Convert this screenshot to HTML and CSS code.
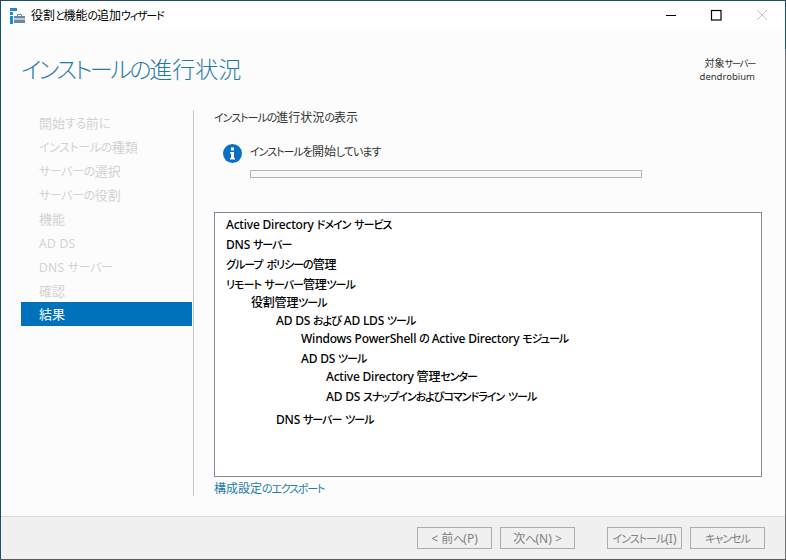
FILE: index.html
```html
<!DOCTYPE html>
<html lang="ja">
<head>
<meta charset="utf-8">
<title>役割と機能の追加ウィザード</title>
<link rel="stylesheet" href="styles.css">
</head>
<body>
<div class="window">
  <header class="titlebar">
    <svg class="app-icon" width="16" height="16" viewBox="0 0 16 16">
      <rect x="0" y="0" width="7" height="3" fill="#1e88d8"/>
      <rect x="0" y="4" width="3" height="3" fill="#1e88d8"/>
      <rect x="0" y="8" width="3" height="8" fill="#1e88d8"/>
      <rect x="4" y="8" width="11" height="7" fill="#6b8aa0"/>
      <rect x="4" y="10" width="11" height="2" fill="#b5c9d8"/>
      <path d="M7.500 8V6.500h4V8" fill="none" stroke="#6b8aa0"/>
    </svg>
    <span class="title-text">役割<span class="k">と</span>機能<span class="k">の</span>追加<span class="k">ウィザード</span></span>
    <div class="controls">
      <svg width="46" height="30" viewBox="0 0 46 30"><path d="M19 14.500h10" stroke="#000"/></svg>
      <svg width="46" height="30" viewBox="0 0 46 30"><rect x="18.500" y="9.500" width="9.500" height="9.500" fill="none" stroke="#000" stroke-width="1.200"/></svg>
      <svg width="46" height="30" viewBox="0 0 46 30"><path d="M18 9l10 10M28 9L18 19" stroke="#c4c4c4" fill="none"/></svg>
    </div>
  </header>
  <div class="content">
    <div class="heading">
      <h1 class="page-title"><span class="tk">インストールの</span>進行状況</h1>
      <div class="server"><div>対象<span class="sk">サーバー</span></div><div class="host">dendrobium</div></div>
    </div>
    <div class="columns">
      <nav class="nav">
        <div class="nav-item">開始<span class="nk">する</span>前<span class="nk">に</span></div>
        <div class="nav-item"><span class="nk">インストールの</span>種類</div>
        <div class="nav-item"><span class="nk">サーバーの</span>選択</div>
        <div class="nav-item"><span class="nk">サーバーの</span>役割</div>
        <div class="nav-item">機能</div>
        <div class="nav-item"><span class="lat">AD DS</span></div>
        <div class="nav-item"><span class="lat">DNS </span><span class="nk">サーバー</span></div>
        <div class="nav-item">確認</div>
        <div class="nav-item nav-active">結果</div>
      </nav>
      <main class="main">
        <div class="section-title"><span class="k">インストールの</span>進行状況<span class="k">の</span>表示</div>
        <div class="status">
          <svg class="info" width="19" height="19" viewBox="0 0 19 19">
            <circle cx="9.500" cy="9.500" r="9.500" fill="#0a6fc2"/>
            <rect x="8" y="3.500" width="3" height="3" fill="#fff"/>
            <path d="M7 8h4v6h1v1.500H7V14h1v-4.500H7z" fill="#fff"/>
          </svg>
          <div class="status-body">
            <div class="status-text"><span class="k">インストールを</span>開始<span class="k">しています</span></div>
            <div class="progress"></div>
          </div>
        </div>
        <div class="list">
          <div class="row h20">Active Directory <span class="k">ドメイン サービス</span></div>
          <div class="row h20">DNS <span class="k">サーバー</span></div>
          <div class="row h21"><span class="k">グループ ポリシーの</span>管理</div>
          <div class="row h18"><span class="k">リモート サーバー</span>管理<span class="k">ツール</span></div>
          <div class="row l1 h18">役割管理<span class="k">ツール</span></div>
          <div class="row l2 h17">AD DS <span class="k">および</span> AD LDS <span class="k">ツール</span></div>
          <div class="row l3 h21">Windows PowerShell <span class="k">の</span> Active Directory <span class="k">モジュール</span></div>
          <div class="row l3 h17">AD DS <span class="k">ツール</span></div>
          <div class="row l4 h20">Active Directory 管理<span class="k">センター</span></div>
          <div class="row l4 h23">AD DS <span class="k">スナップインおよびコマンドライン ツール</span></div>
          <div class="row l2 h20">DNS <span class="k">サーバー ツール</span></div>
        </div>
        <a class="export">構成設定<span class="k">のエクスポート</span></a>
      </main>
    </div>
  </div>
  <footer class="footer">
    <button class="btn">&lt; 前<span class="k">へ</span>(P)</button>
    <button class="btn gap-s">次<span class="k">へ</span>(N) &gt;</button>
    <button class="btn gap-l"><span class="k">インストール</span>(I)</button>
    <button class="btn gap-s"><span class="k">キャンセル</span></button>
  </footer>
</div>
</body>
</html>
```
FILE: styles.css
```css
* { box-sizing: border-box; }
html, body { margin: 0; padding: 0; }
body {
  width: 786px; height: 560px; overflow: hidden;
  font-family: "Noto Sans", "Noto Sans CJK JP", sans-serif;
  font-size: 12px;
  font-feature-settings: "palt";
  color: #1a1a1a;
}
.k { font-size: 11px; letter-spacing: -1px; word-spacing: 2px; }
.window {
  position: relative;
  width: 786px; height: 560px;
  display: flex; flex-direction: column;
  border-top: 1px solid #18506f;
  border-left: 1px solid #18506f;
  border-right: 1px solid #6f6f6f;
  border-bottom: 1px solid #5a5a5a;
  background: #fcfcfc;
}
.window::before {
  content: "";
  position: absolute; top: 0; right: -1px;
  width: 1px; height: 48px;
  background: #18506f;
}
.titlebar {
  height: 30px; flex: none;
  display: flex; align-items: center;
  background: #fff;
  padding-left: 9px;
}
.app-icon { flex: none; margin-right: 5px; }
.title-text { color: #000; margin-top: -2px; }
.title-text .k, .export .k { letter-spacing: -1.200px; }
.controls { margin-left: auto; display: flex; }
.controls svg { display: block; }
.content { flex: 1; display: flex; flex-direction: column; min-height: 0; }
.heading {
  height: 79px; flex: none;
  display: flex; justify-content: space-between;
  padding: 21px 30px 0 20px;
}
.page-title {
  margin: 0;
  font-size: 23px; font-weight: 300; line-height: 34px;
  color: #1f7ba6;
}
.tk { letter-spacing: -2.400px; }
.server {
  text-align: right; font-size: 10px; line-height: 14px; color: #333;
  padding-top: 4px;
}
.sk { font-size: 9.500px; letter-spacing: -1.500px; }
.host { font-size: 9.500px; margin-top: -1px; }
.columns { flex: 1; display: flex; min-height: 0; }
.nav {
  width: 171px; margin: 1px 0 0 20px;
  flex: none;
  font-size: 13px;
}
.nav-item {
  height: 24px; line-height: 24px;
  padding-left: 18px;
  color: #d2d2d2;
}
.nk { font-size: 12px; letter-spacing: -0.400px; }
.lat { font-size: 12px; letter-spacing: 0.300px; }
.nav-active { background: #0072bc; color: #fff; margin-top: -1px; }
.main {
  margin: 0 23px 20px 1px;
  flex: 1;
  border-left: 1px solid #c9c9c9;
  padding-left: 20px;
  display: flex; flex-direction: column;
}
.section-title { height: 18px; line-height: 18px; margin-top: -1px; color: #333; }
.status { display: flex; margin: 17px 0 0 9px; }
.info { flex: none; margin: 0 8px 0 0; }
.status-body { flex: 1; }
.status-text { height: 17px; line-height: 16px; color: #333; }
.progress {
  width: 392px; height: 8px; margin-top: 9px;
  border: 1px solid #b4b4b4; background: #f8f8f8;
}
.list {
  height: 265px; flex: none;
  margin-top: 34px;
  border: 1px solid #7f8a99;
  background: #fff;
  padding: 2px 11px 0;
  color: #000;
}
.row { white-space: nowrap; font-weight: 500; letter-spacing: -0.200px; }
.h17 { height: 17px; line-height: 17px; }
.h18 { height: 18px; line-height: 18px; }
.h20 { height: 20px; line-height: 20px; }
.h21 { height: 21px; line-height: 20px; }
.h23 { height: 23px; line-height: 20px; }
.l1 { padding-left: 25px; }
.l2 { padding-left: 50px; }
.l3 { padding-left: 75px; }
.l4 { padding-left: 100px; }
.export { display: block; margin-top: 4px; line-height: 16px; color: #1f7ba6; }
.footer {
  height: 43px; flex: none;
  display: flex; align-items: flex-start;
  padding: 10px 0 0 416px;
  background: #f0f0f0;
  border-top: 1px solid #d9d9d9;
}
.btn {
  width: 75px; height: 22px; padding: 0;
  font: inherit; font-feature-settings: inherit;
  color: #808080;
  background: #f0f0f0;
  border: 1px solid #adadad;
  border-radius: 0;
  white-space: nowrap;
}
.gap-s { margin-left: 8px; }
.gap-l { margin-left: 32px; }
```
